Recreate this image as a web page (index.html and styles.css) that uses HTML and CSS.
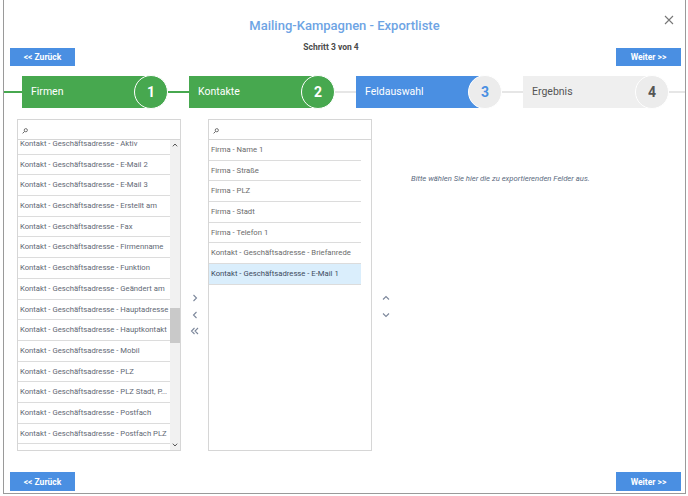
FILE: index.html
```html
<!DOCTYPE html>
<html lang="de">
<head>
    <meta charset="UTF-8">
    <title>Mailing-Kampagnen - Exportliste</title>
    <link rel="stylesheet" href="styles.css">
</head>
<body>

    <div class="dialog">
        <div class="dlg-head">
            <h1>Mailing-Kampagnen - Exportliste</h1>
            <div class="step-info">Schritt 3 von 4</div>
            <button class="close" title="Schließen">
                <svg width="10" height="10" viewBox="0 0 10 10"><path d="M1 1L9 9M9 1L1 9" stroke="#777" stroke-width="1.1"/></svg>
            </button>
        </div>

        <div class="nav-row">
            <button class="btn">&lt;&lt; Zurück</button>
            <button class="btn">Weiter &gt;&gt;</button>
        </div>

        <!-- Stepper -->
        <div class="stepper">
            <div class="link lead"></div>
            <div class="step done">
                <div class="step-label">Firmen</div>
                <div class="step-num">1</div>
            </div>
            <div class="link"></div>
            <div class="step done">
                <div class="step-label">Kontakte</div>
                <div class="step-num">2</div>
            </div>
            <div class="link todo"></div>
            <div class="step active">
                <div class="step-label">Feldauswahl</div>
                <div class="step-num">3</div>
            </div>
            <div class="link todo"></div>
            <div class="step todo">
                <div class="step-label">Ergebnis</div>
                <div class="step-num">4</div>
            </div>
            <div class="link todo tail"></div>
        </div>

        <div class="content">
            <!-- available fields -->
            <div class="picklist">
                <div class="search">
                    <svg width="6" height="6" viewBox="0 0 6 6"><circle cx="3.8" cy="2.2" r="1.6" fill="none" stroke="#555" stroke-width="0.8"/><path d="M2.6 3.4L0.6 5.4" stroke="#555" stroke-width="0.9"/></svg>
                </div>
                <div class="list-wrap">
                    <ul class="items scrolled">
                        <li>Kontakt - Geschäftsadresse - Aktiv</li>
                        <li>Kontakt - Geschäftsadresse - E-Mail 2</li>
                        <li>Kontakt - Geschäftsadresse - E-Mail 3</li>
                        <li>Kontakt - Geschäftsadresse - Erstellt am</li>
                        <li>Kontakt - Geschäftsadresse - Fax</li>
                        <li>Kontakt - Geschäftsadresse - Firmenname</li>
                        <li>Kontakt - Geschäftsadresse - Funktion</li>
                        <li>Kontakt - Geschäftsadresse - Geändert am</li>
                        <li>Kontakt - Geschäftsadresse - Hauptadresse</li>
                        <li>Kontakt - Geschäftsadresse - Hauptkontakt</li>
                        <li>Kontakt - Geschäftsadresse - Mobil</li>
                        <li>Kontakt - Geschäftsadresse - PLZ</li>
                        <li>Kontakt - Geschäftsadresse - PLZ Stadt, P...</li>
                        <li>Kontakt - Geschäftsadresse - Postfach</li>
                        <li>Kontakt - Geschäftsadresse - Postfach PLZ</li>
                        <li>Kontakt - Geschäftsadresse - Stadt</li>
                    </ul>
                    <div class="scrollbar">
                        <svg class="sb-up" width="6" height="4" viewBox="0 0 6 4"><path d="M0.8 3.3L3 1L5.2 3.3" fill="none" stroke="#444" stroke-width="0.9"/></svg>
                        <div class="sb-thumb"></div>
                        <svg class="sb-down" width="6" height="4" viewBox="0 0 6 4"><path d="M0.8 0.7L3 3L5.2 0.7" fill="none" stroke="#444" stroke-width="0.9"/></svg>
                    </div>
                </div>
            </div>

            <div class="arrows">
                <div class="arrow"><svg width="6" height="8" viewBox="0 0 6 8"><path d="M1.5 1L4.5 4L1.5 7" fill="none" stroke="#7c879b" stroke-width="1.1"/></svg></div>
                <div class="arrow"><svg width="6" height="8" viewBox="0 0 6 8"><path d="M4.5 1L1.5 4L4.5 7" fill="none" stroke="#7c879b" stroke-width="1.1"/></svg></div>
                <div class="arrow"><svg width="9" height="8" viewBox="0 0 9 8"><path d="M4.5 1L1.5 4L4.5 7M8 1L5 4L8 7" fill="none" stroke="#7c879b" stroke-width="1.1"/></svg></div>
            </div>

            <!-- selected fields -->
            <div class="picklist">
                <div class="search">
                    <svg width="6" height="6" viewBox="0 0 6 6"><circle cx="3.8" cy="2.2" r="1.6" fill="none" stroke="#555" stroke-width="0.8"/><path d="M2.6 3.4L0.6 5.4" stroke="#555" stroke-width="0.9"/></svg>
                </div>
                <div class="list-wrap">
                    <ul class="items chosen">
                        <li>Firma - Name 1</li>
                        <li>Firma - Straße</li>
                        <li>Firma - PLZ</li>
                        <li>Firma - Stadt</li>
                        <li>Firma - Telefon 1</li>
                        <li>Kontakt - Geschäftsadresse - Briefanrede</li>
                        <li class="selected">Kontakt - Geschäftsadresse - E-Mail 1</li>
                    </ul>
                    <div class="scrollbar blank"></div>
                </div>
            </div>

            <div class="arrows order">
                <div class="arrow"><svg width="8" height="6" viewBox="0 0 8 6"><path d="M1 4.5L4 1.5L7 4.5" fill="none" stroke="#7c879b" stroke-width="1.1"/></svg></div>
                <div class="arrow"><svg width="8" height="6" viewBox="0 0 8 6"><path d="M1 1.5L4 4.5L7 1.5" fill="none" stroke="#7c879b" stroke-width="1.1"/></svg></div>
            </div>

            <div class="info">
                <p>Bitte wählen Sie hier die zu exportierenden Felder aus.</p>
            </div>
        </div>

        <div class="nav-row bottom">
            <button class="btn">&lt;&lt; Zurück</button>
            <button class="btn">Weiter &gt;&gt;</button>
        </div>
    </div>

</body>
</html>
```

FILE: styles.css
```css
* {
    box-sizing: border-box;
}
body {
    margin: 0;
    background: #fff;
    font-family: Roboto, "Liberation Sans", sans-serif;
}
.dialog {
    position: relative;
    margin: 0 2px 0 3px;
    height: 494px;
    border: 1px solid #9a9a9a;
    border-top: none;
    background: #fff;
}

/* header */
.dlg-head {
    text-align: center;
    padding-top: 17px;
}
.dlg-head h1 {
    margin: 0;
    font-size: 13px;
    line-height: 18px;
    font-weight: 500;
    color: #6ea4e4;
}
.step-info {
    margin-top: 6px;
    padding-right: 27px;
    font-size: 8.5px;
    line-height: 12px;
    font-weight: bold;
    color: #4a4a4a;
}
.close {
    position: absolute;
    top: 15px;
    right: 11px;
    width: 10px;
    height: 10px;
    padding: 0;
    border: none;
    background: none;
    display: flex;
}

/* buttons */
.nav-row {
    display: flex;
    justify-content: space-between;
    margin-top: -5px;
    padding: 0 4px 0 6px;
}
.nav-row.bottom {
    margin-top: 21px;
}
.btn {
    width: 65px;
    height: 18px;
    padding: 0;
    border: none;
    background: #4a8fe2;
    color: #fff;
    font-family: Roboto, "Liberation Sans", sans-serif;
    font-size: 8.5px;
    font-weight: bold;
}
.nav-row.bottom .btn {
    height: 19px;
}

/* stepper */
.stepper {
    display: flex;
    align-items: center;
    height: 34px;
    margin-top: 9px;
}
.link {
    width: 21px;
    height: 2px;
    background: #47a84f;
}
.link.lead {
    width: 18px;
}
.link.tail {
    flex: 1;
}
.link.todo {
    background: #e6e6e6;
}
.step {
    position: relative;
    width: 146px;
    height: 34px;
}
.step-label {
    position: absolute;
    left: 0;
    top: 1px;
    width: 130px;
    height: 32px;
    padding-left: 9px;
    line-height: 32px;
    font-size: 10.5px;
    color: #fff;
    background: #47a84f;
}
.step-num {
    position: absolute;
    right: 0;
    top: 0;
    width: 34px;
    height: 34px;
    border: 1px solid #fff;
    border-radius: 50%;
    background: #47a84f;
    color: #fff;
    font-size: 14px;
    font-weight: bold;
    line-height: 32px;
    text-align: center;
}
.step.active .step-label {
    background: #4a8fe2;
}
.step.active .step-num {
    background: #ececec;
    color: #4a8fe2;
}
.step.todo .step-label {
    background: #efefef;
    color: #555;
}
.step.todo .step-num {
    background: #ececec;
    color: #555;
}

/* lists */
.content {
    display: flex;
    height: 332px;
    margin-top: 10px;
    padding-left: 13px;
}
.picklist {
    width: 164px;
    height: 332px;
    border: 1px solid #d6d6d6;
    display: flex;
    flex-direction: column;
}
.search {
    height: 20px;
    flex: none;
    border-bottom: 1px solid #d6d6d6;
    padding: 2px 0 0 4px;
    display: flex;
    align-items: center;
}
.list-wrap {
    flex: 1;
    display: flex;
    overflow: hidden;
}
.items {
    flex: 1;
    min-width: 0;
    list-style: none;
    margin: 0;
    padding: 0;
    overflow: hidden;
}
.items.scrolled {
    margin-top: -6px;
}
.items li {
    height: 20.7px;
    line-height: 19.7px;
    padding-left: 2px;
    border-bottom: 1px solid #dcdcdc;
    font-size: 7.7px;
    color: #5f6874;
    white-space: nowrap;
    overflow: hidden;
    text-overflow: ellipsis;
}
.items.chosen li {
    color: #6b6b6b;
}
.items li.selected {
    background: #daeefc;
    color: #3c4a5c;
}
.scrollbar {
    position: relative;
    width: 10px;
    flex: none;
    background: #f1f1f1;
}
.scrollbar.blank {
    background: #fff;
}
.sb-up,
.sb-down {
    position: absolute;
    left: 2px;
}
.sb-up {
    top: 3px;
}
.sb-down {
    bottom: 3px;
}
.sb-thumb {
    position: absolute;
    left: 0;
    top: 168px;
    width: 10px;
    height: 35px;
    background: #c9c9c9;
}

/* move buttons */
.arrows {
    width: 27px;
    padding-top: 171px;
    display: flex;
    flex-direction: column;
    align-items: center;
}
.arrows.order {
    width: 28px;
}
.arrow {
    height: 16.5px;
    display: flex;
    align-items: center;
    justify-content: center;
}
.info {
    flex: 1;
    padding: 55px 0 0 11px;
}
.info p {
    margin: 0;
    font-size: 7.7px;
    line-height: 10px;
    font-style: italic;
    color: #5b6b80;
}
```
